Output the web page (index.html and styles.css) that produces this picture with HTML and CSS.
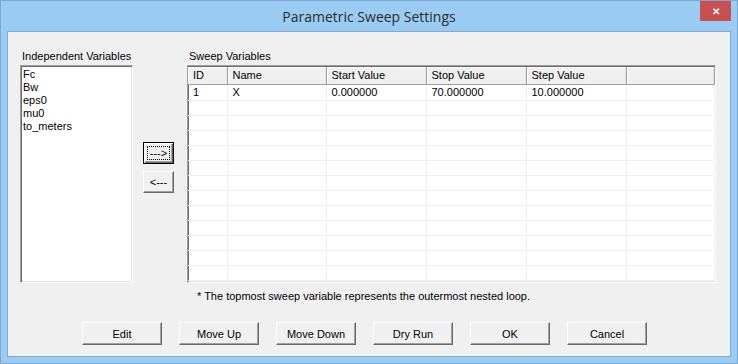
FILE: index.html
```html
<!DOCTYPE html>
<html>
<head>
    <title>Parametric Sweep Settings</title>
    <link rel="stylesheet" href="styles.css">
</head>
<body>
    <div class="window">
        <div class="titlebar">
            <span class="title">Parametric Sweep Settings</span>
            <span class="close">&#x2715;</span>
        </div>

        <div class="client">
            <div class="main">
                <div class="left-panel">
                    <label>Independent Variables</label>
                    <div class="listbox">
                        <div>Fc</div>
                        <div>Bw</div>
                        <div>eps0</div>
                        <div>mu0</div>
                        <div>to_meters</div>
                    </div>
                </div>

                <div class="arrows">
                    <button class="btn default"><span class="focus">---&gt;</span></button>
                    <button class="btn">&lt;---</button>
                </div>

                <div class="right-panel">
                    <label>Sweep Variables</label>
                    <div class="grid-box">
                        <table class="grid">
                            <colgroup>
                                <col style="width: 39px">
                                <col style="width: 99px">
                                <col style="width: 100px">
                                <col style="width: 100px">
                                <col style="width: 100px">
                                <col>
                            </colgroup>
                            <thead>
                                <tr>
                                    <th>ID</th>
                                    <th>Name</th>
                                    <th>Start Value</th>
                                    <th>Stop Value</th>
                                    <th>Step Value</th>
                                    <th></th>
                                </tr>
                            </thead>
                            <tbody id="rows">
                                <tr>
                                    <td>1</td>
                                    <td>X</td>
                                    <td>0.000000</td>
                                    <td>70.000000</td>
                                    <td>10.000000</td>
                                    <td></td>
                                </tr>
                            </tbody>
                        </table>
                    </div>
                    <p class="note">* The topmost sweep variable represents the outermost nested loop.</p>
                </div>
            </div>

            <div class="buttons">
                <button class="btn">Edit</button>
                <button class="btn">Move Up</button>
                <button class="btn">Move Down</button>
                <button class="btn">Dry Run</button>
                <button class="btn">OK</button>
                <button class="btn">Cancel</button>
            </div>
        </div>
    </div>

    <script>
        // filas vacías para completar la grilla
        const tbody = document.getElementById('rows');
        for (let i = 0; i < 14; i++) {
            const tr = document.createElement('tr');
            for (let c = 0; c < 6; c++) tr.appendChild(document.createElement('td'));
            tbody.appendChild(tr);
        }
    </script>
</body>
</html>
```

FILE: styles.css
```css
body { margin: 0; font-family: "Liberation Sans", Arial, sans-serif; font-size: 11px; color: #000; }
.window {
    width: 738px;
    height: 364px;
    box-sizing: border-box;
    border: 1px solid #7AA7D4;
    background: #99CBF3;
    display: flex;
    flex-direction: column;
}
.titlebar {
    height: 30px;
    position: relative;
    display: flex;
    align-items: center;
    justify-content: center;
}
.title {
    font-family: "Open Sans", "Noto Sans", sans-serif;
    font-size: 14px;
    color: #2B2B2B;
    margin-top: 1px;
}
.close {
    position: absolute;
    top: 0;
    right: 6px;
    width: 31px;
    height: 20px;
    background: #C75050;
    color: #fff;
    font-size: 10px;
    font-weight: bold;
    display: flex;
    align-items: center;
    justify-content: center;
}
.client {
    flex: 1;
    margin: 0 6px 6px;
    border: 1px solid #82A9D1;
    background: #F0F0F0;
    display: flex;
    flex-direction: column;
    padding: 18px 14px 0 12px;
}
.main { display: flex; height: 252px; }
label { display: block; height: 15px; line-height: 13px; padding-left: 2px; }
.left-panel { width: 113px; }
.listbox, .grid-box {
    height: 218px;
    box-sizing: border-box;
    background: #fff;
    border: 1px solid;
    border-color: #A0A0A0 #fff #fff #A0A0A0;
    box-shadow: inset 1px 1px 0 #696969, inset -1px -1px 0 #E3E3E3;
    overflow: hidden;
}
.listbox { padding: 2px 2px; }
.listbox div { height: 13px; line-height: 13px; }
.arrows {
    width: 31px;
    margin: 0 13px 0 10px;
    padding-top: 92px;
    display: flex;
    flex-direction: column;
    gap: 7px;
}
.btn {
    height: 22px;
    padding: 0;
    font-family: "Liberation Sans", Arial, sans-serif;
    font-size: 11px;
    color: #000;
    background: #F0F0F0;
    border: 1px solid;
    border-color: #fff #696969 #696969 #fff;
    box-shadow: inset -1px -1px 0 #A0A0A0;
}
.arrows .btn { width: 31px; }
.btn.default {
    border: 1px solid #000;
    box-shadow: inset 1px 1px 0 #fff, inset -1px -1px 0 #696969, inset -2px -2px 0 #A0A0A0;
    padding: 3px;
}
.focus {
    display: block;
    height: 100%;
    box-sizing: border-box;
    border: 1px dotted #000;
    line-height: 12px;
}
.right-panel { flex: 1; }
.grid-box { padding: 1px 0 0 0; }
.grid { border-collapse: collapse; table-layout: fixed; width: 100%; }
.grid th {
    height: 17px;
    box-sizing: border-box;
    padding: 0 0 0 5px;
    text-align: left;
    font-weight: normal;
    background: #F0F0F0;
    border-bottom: 1px solid #A0A0A0;
    border-right: 1px solid #A0A0A0;
    box-shadow: inset 1px 1px 0 #fff, inset -1px 0 0 #E3E3E3;
}
.grid td {
    height: 14px;
    padding: 0 0 0 5px;
    border-right: 1px solid #F0F0F0;
    border-bottom: 1px solid #F0F0F0;
    white-space: nowrap;
}
.grid tbody tr:first-child td { height: 15px; }
.note { margin: 7px 0 0 10px; line-height: 13px; }
.buttons {
    display: flex;
    gap: 17px;
    padding-left: 62px;
    margin-top: 20px;
}
.buttons .btn { width: 80px; height: 23px; }
```
